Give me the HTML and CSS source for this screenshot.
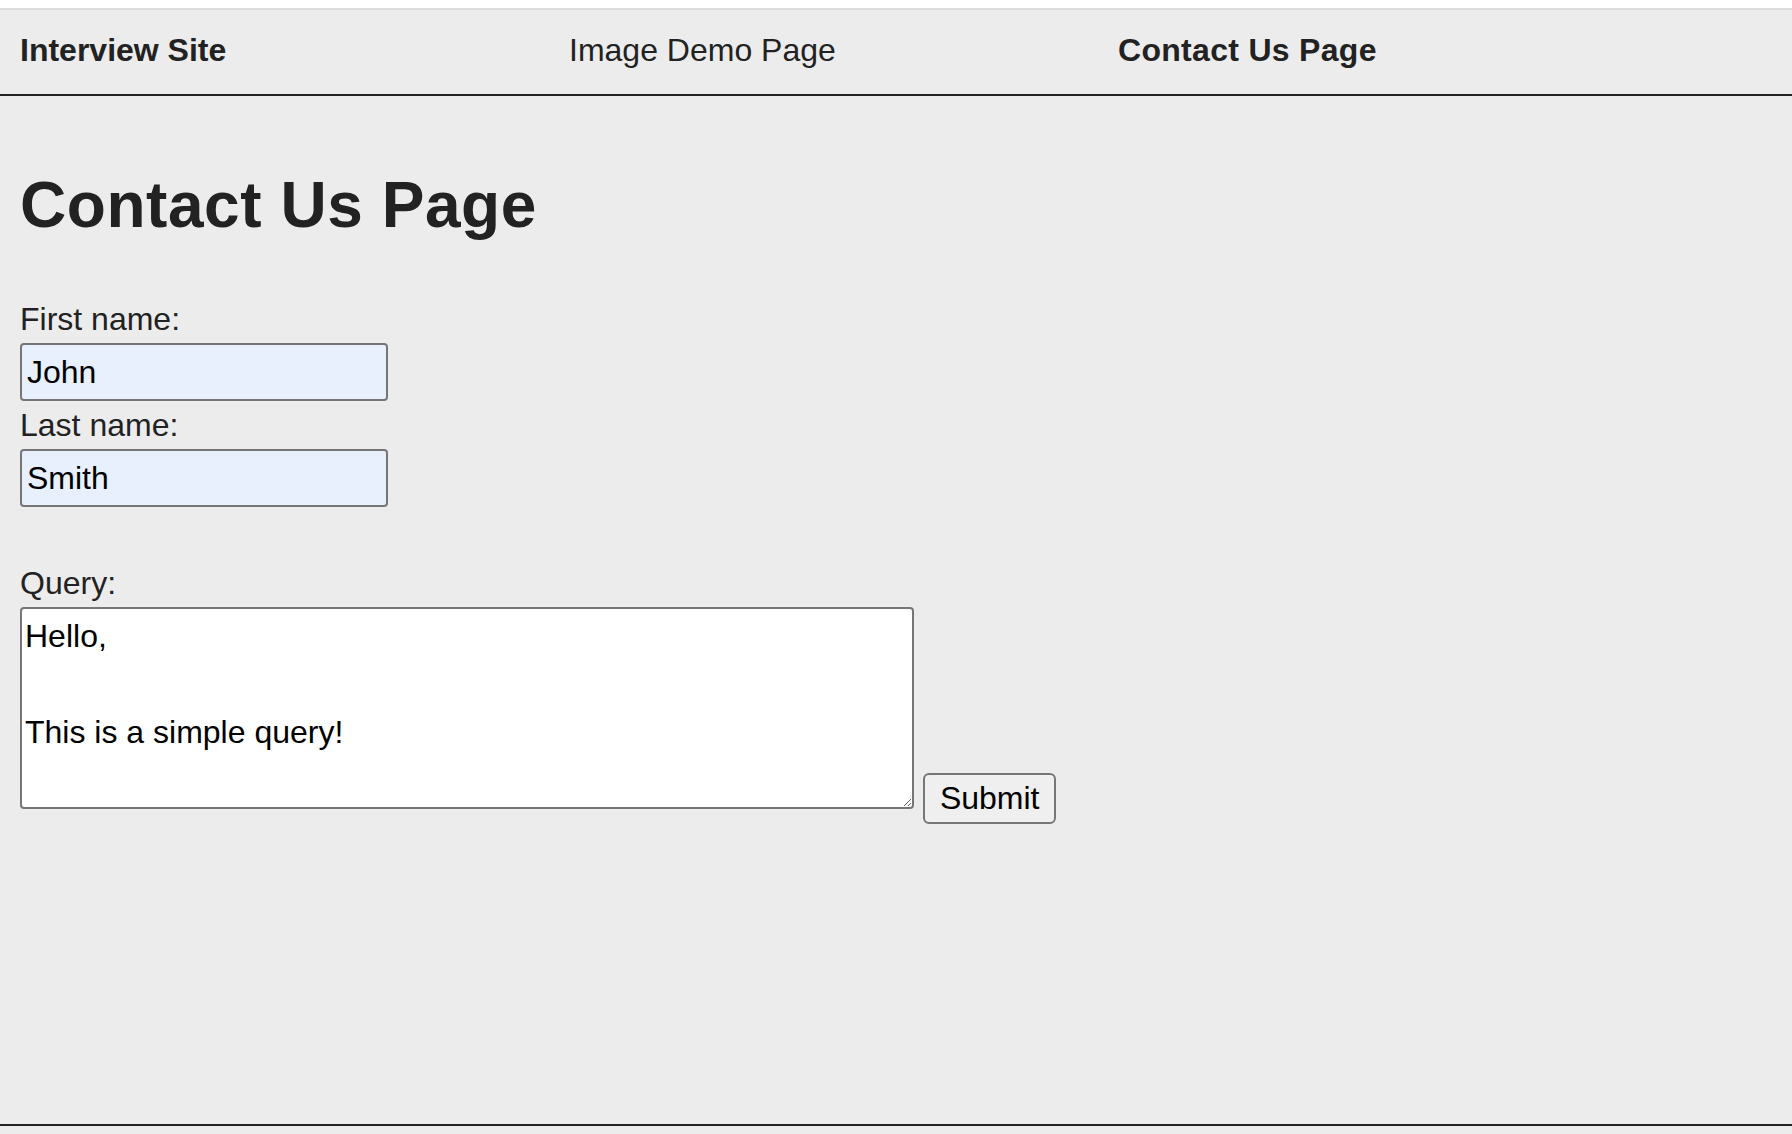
FILE: index.html
```html
<!DOCTYPE html>
<html lang="en">
<head>
<meta charset="utf-8">
<title>Contact Us Page</title>
<link rel="stylesheet" href="styles.css">
</head>
<body>
<nav class="topnav">
  <a class="nav-item nav-brand" href="#">Interview Site</a>
  <a class="nav-item" href="#">Image Demo Page</a>
  <a class="nav-item nav-active" href="#">Contact Us Page</a>
</nav>
<main class="content">
  <h1 class="page-title">Contact Us Page</h1>
  <form class="contact-form">
    <label class="field-label" for="fname">First name:</label>
    <input class="text-input" id="fname" type="text" value="John">
    <label class="field-label" for="lname">Last name:</label>
    <input class="text-input" id="lname" type="text" value="Smith">
    <div class="spacer"></div>
    <label class="field-label" for="query">Query:</label>
    <div class="query-row"><textarea class="query-box" id="query" rows="4">Hello,

This is a simple query!</textarea> <button class="submit-btn" type="button">Submit</button></div>
  </form>
</main>
<footer class="footer"></footer>
</body>
</html>
```

FILE: styles.css
```css
html {
  background: #ffffff;
}

body {
  margin: 8px 0 0;
  background: #ececec;
  font-family: "Liberation Sans", Arial, Helvetica, sans-serif;
  font-size: 32px;
  line-height: 48px;
  color: #222222;
}

.topnav {
  display: grid;
  grid-template-columns: 549px 549px 549px;
  padding: 16px 20px 20px;
  border-top: 2px solid #dcdcdc;
  border-bottom: 2px solid #222222;
}

.nav-item {
  color: #222222;
  text-decoration: none;
}

.nav-brand {
  font-weight: bold;
}

.nav-active {
  font-weight: bold;
  letter-spacing: 0.3px;
}

.content {
  box-sizing: border-box;
  min-height: 1028px;
  padding: 18px 20px 0;
}

.page-title {
  margin: 43px 0 42px;
  font-size: 64px;
  line-height: 96px;
  font-weight: bold;
  letter-spacing: 0.55px;
  color: #222222;
}

.contact-form {
  margin: 0;
}

.field-label {
  display: block;
  line-height: 48px;
}

.text-input {
  display: block;
  box-sizing: border-box;
  width: 368px;
  height: 58px;
  margin: 0;
  padding: 3px 5px;
  font-family: inherit;
  font-size: 32px;
  line-height: 48px;
  color: #000000;
  background: #e8f0fe;
  border: 2px solid #767676;
  border-radius: 4px;
}

.spacer {
  height: 52px;
}

.query-row {
  line-height: 48px;
}

.query-box {
  box-sizing: border-box;
  width: 894px;
  height: 202px;
  margin: 0;
  padding: 3px 3px;
  font-family: inherit;
  font-size: 32px;
  line-height: 48px;
  color: #000000;
  background: #ffffff;
  border: 2px solid #767676;
  border-radius: 4px;
  vertical-align: baseline;
}

.submit-btn {
  margin: 0;
  padding: 5px 15px;
  font-family: inherit;
  font-size: 32px;
  line-height: 37px;
  color: #000000;
  background: #efefef;
  border: 2px solid #767676;
  border-radius: 6px;
}

.footer {
  height: 30px;
  border-top: 2px solid #222222;
}
```
